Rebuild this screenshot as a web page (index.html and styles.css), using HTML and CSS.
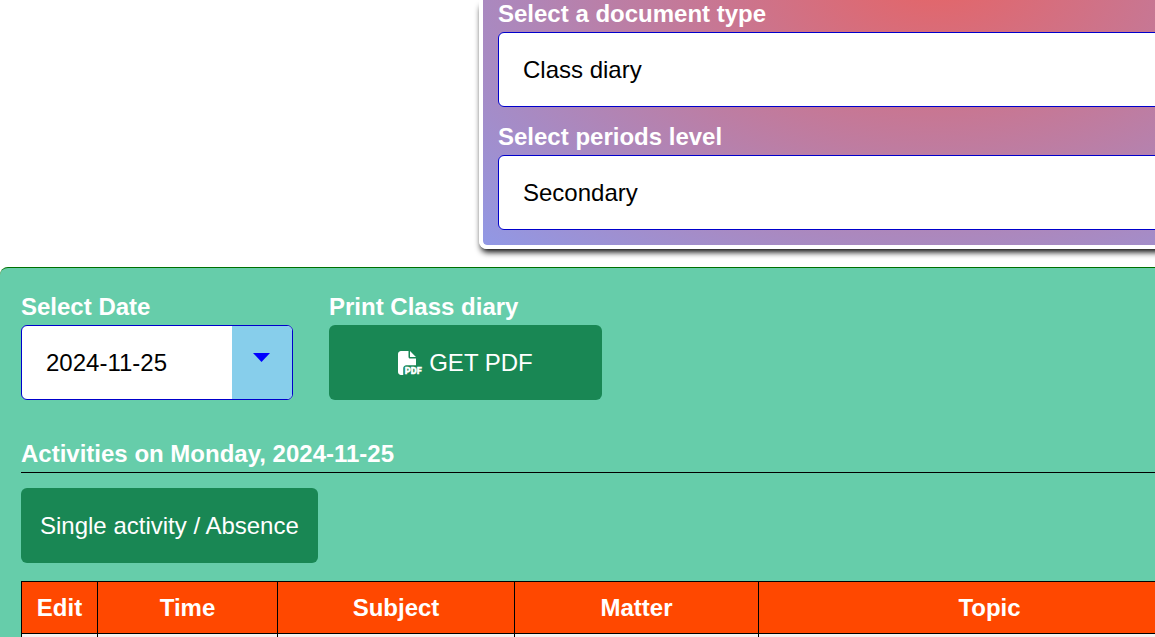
FILE: index.html
```html
<!DOCTYPE html>
<html lang="en">
<head>
<meta charset="utf-8">
<title>Class diary</title>
<link rel="stylesheet" href="styles.css">
</head>
<body>
<form class="chooser">
  <div class="field">
    <label class="label" for="doc-type">Select a document type</label>
    <select class="select" id="doc-type"><option>Class diary</option></select>
  </div>
  <div class="field">
    <label class="label" for="level">Select periods level</label>
    <select class="select" id="level"><option>Secondary</option></select>
  </div>
</form>
<main class="diary">
  <div class="controls">
    <div class="field">
      <label class="label" for="date">Select Date</label>
      <div class="picker">
        <select class="select" id="date"><option>2024-11-25</option></select>
      </div>
    </div>
    <div class="field">
      <label class="label" for="pdf">Print Class diary</label>
      <button class="button button-pdf" id="pdf" type="button">
        <svg class="icon" viewBox="0 0 512 512" aria-hidden="true">
          <path d="M0 64C0 28.7 28.7 0 64 0H224V128c0 17.7 14.3 32 32 32H384V304H176c-35.3 0-64 28.7-64 64V512H64c-35.3 0-64-28.7-64-64ZM384 128H256V0Z"/>
          <text class="icon-text" x="146" y="500">PDF</text>
        </svg>
        <span>GET PDF</span>
      </button>
    </div>
  </div>
  <h2 class="heading">Activities on Monday, 2024-11-25</h2>
  <button class="button" type="button">Single activity / Absence</button>
  <table class="table">
    <colgroup>
      <col class="col-edit"><col class="col-time"><col class="col-subject"><col class="col-matter"><col class="col-topic">
    </colgroup>
    <thead>
      <tr><th>Edit</th><th>Time</th><th>Subject</th><th>Matter</th><th>Topic</th></tr>
    </thead>
    <tbody>
      <tr><td></td><td></td><td></td><td></td><td></td></tr>
    </tbody>
  </table>
</main>
</body>
</html>
```

FILE: styles.css
```css
* {
  box-sizing: border-box;
}

html {
  overflow: hidden;
}

body {
  margin: 0;
  background: #fff;
  font-family: "Liberation Sans", Arial, sans-serif;
  font-size: 24px;
  line-height: 28px;
}

.chooser {
  display: flex;
  flex-direction: column;
  gap: 16px;
  margin-left: 479px;
  margin-right: -20px;
  padding: 0 0 15px 15px;
  border: 4px solid #fff;
  border-width: 0 0 4px 4px;
  border-radius: 0 0 0 8px;
  background: radial-gradient(640px 380px at 452px -24px, #e66465, #9198e5) padding-box;
  box-shadow: 0 5px 6px -2px #000;
}

.field {
  display: flex;
  flex-direction: column;
  gap: 4px;
}

.label {
  color: #fff;
  font-weight: bold;
}

.select {
  appearance: none;
  width: 100%;
  height: 75px;
  padding: 0 24px;
  border: 1px solid #00c;
  border-radius: 6px;
  background: #fff;
  color: #000;
  font: inherit;
}

.diary {
  margin-top: 18px;
  padding: 25px 0 0 21px;
  border-top: 1px solid #007000;
  border-top-left-radius: 8px;
  background: #66cdaa;
  overflow: hidden;
}

.controls {
  display: flex;
  gap: 36px;
  margin-bottom: 40px;
}

.picker {
  position: relative;
  width: 272px;
}

.picker::before,
.picker::after {
  content: "";
  position: absolute;
  pointer-events: none;
}

.picker::before {
  top: 1px;
  right: 1px;
  bottom: 1px;
  width: 60px;
  border-radius: 0 5px 5px 0;
  background: #87ceeb;
}

.picker::after {
  top: 28px;
  right: 23px;
  width: 17px;
  height: 9px;
  background: #00f;
  clip-path: polygon(0 0, 100% 0, 50% 100%);
}

.button {
  height: 75px;
  padding: 0 19px;
  border: 0;
  border-radius: 6px;
  background: #198754;
  color: #fff;
  font: inherit;
}

.button-pdf {
  display: flex;
  align-items: center;
  justify-content: center;
  gap: 7px;
  width: 273px;
}

.icon {
  width: 24px;
  height: 24px;
  overflow: visible;
  fill: currentColor;
}

.icon-text {
  font: 900 196px Roboto, sans-serif;
  stroke: currentColor;
  stroke-width: 8px;
}

.heading {
  margin: 0 0 15px;
  padding-bottom: 4px;
  border-bottom: 1px solid #000;
  color: #fff;
  font-size: 24px;
}

.table {
  width: 1200px;
  margin-top: 18px;
  table-layout: fixed;
  border-collapse: collapse;
  background: #f6f2f2;
}

.table th,
.table td {
  height: 52px;
  padding: 0;
  border: 1px solid #000;
}

.table th {
  background: #ff4800;
  color: #fff;
}

.col-edit {
  width: 76px;
}

.col-time {
  width: 180px;
}

.col-subject {
  width: 237px;
}

.col-matter {
  width: 244px;
}
```
